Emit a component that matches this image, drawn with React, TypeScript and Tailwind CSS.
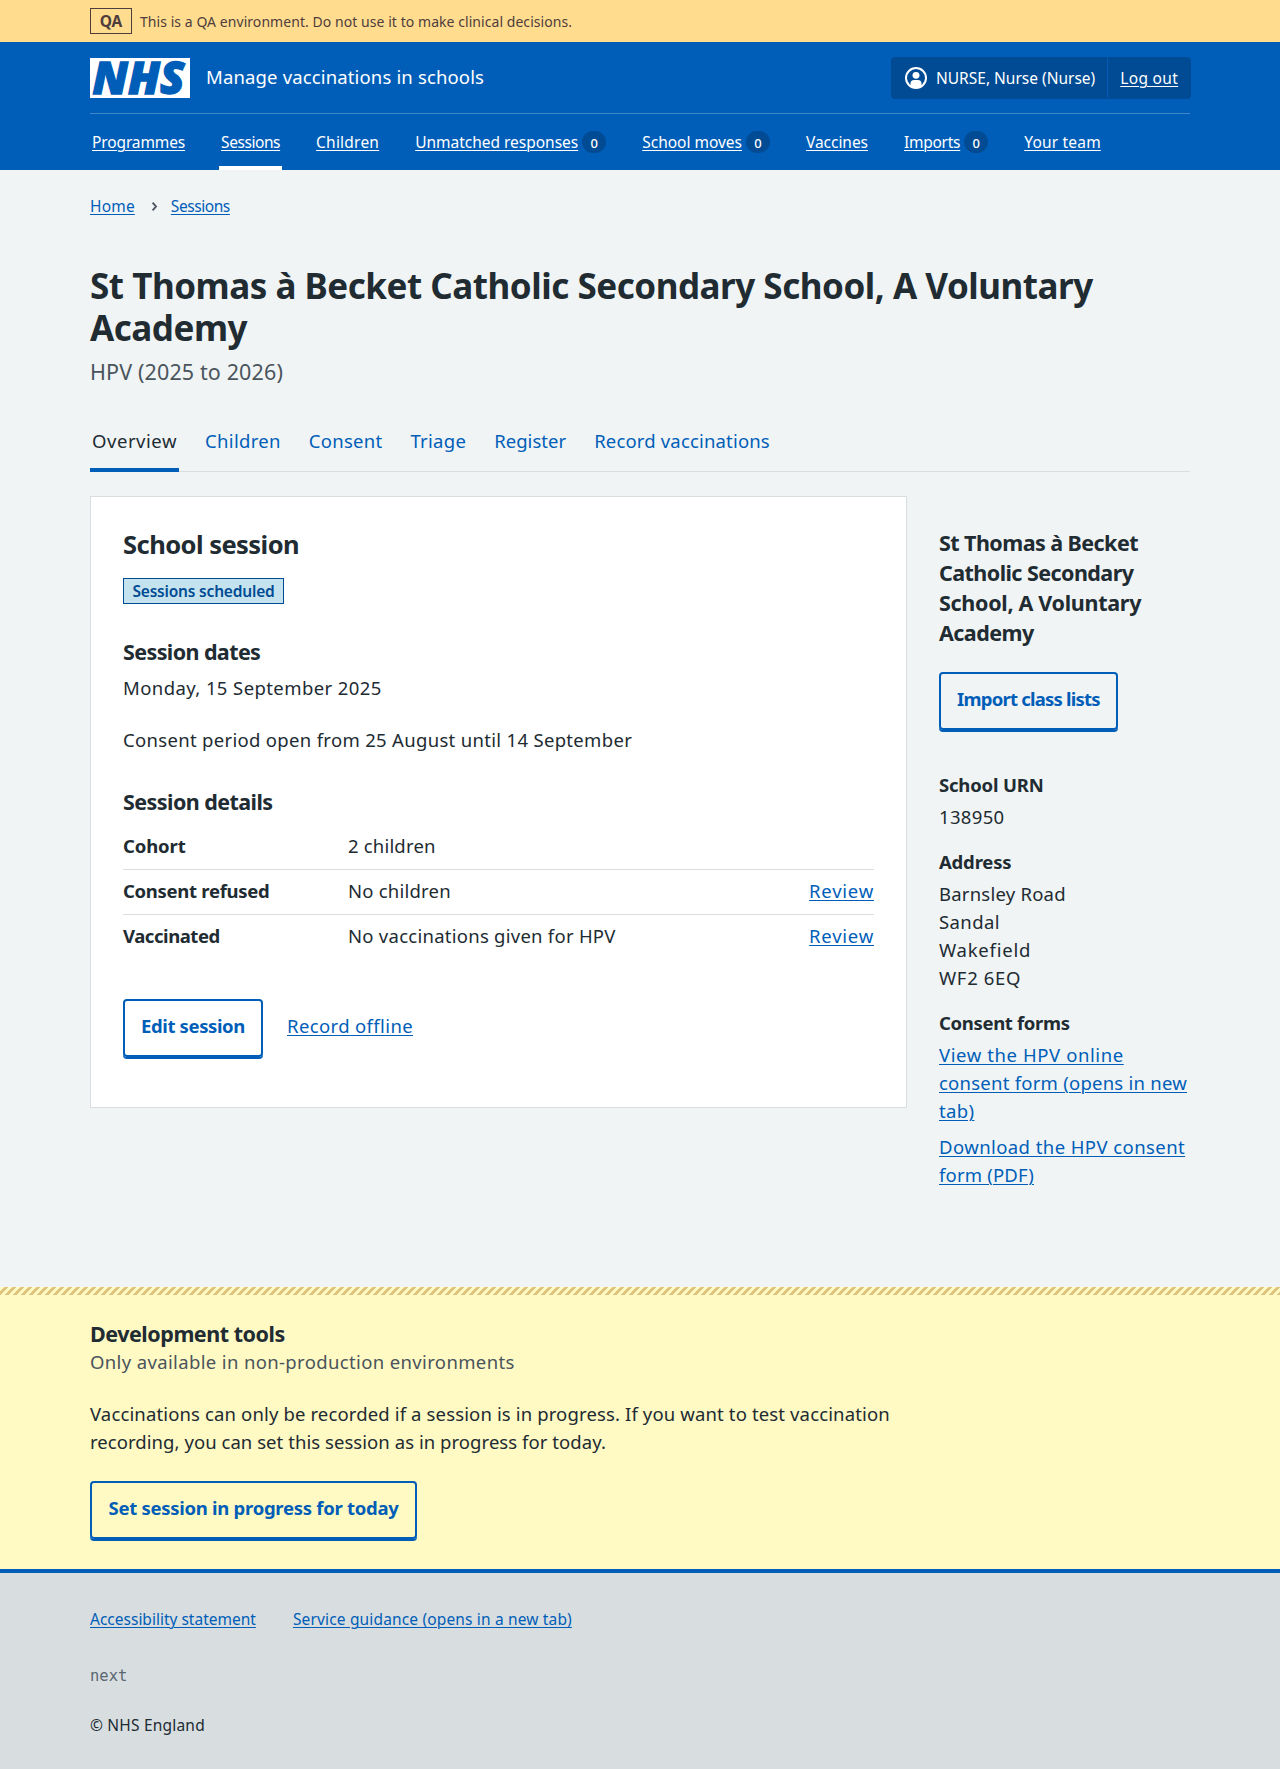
import type { ReactNode } from 'react';

function NhsLogo() {
  return (
    <svg className="mt-px h-10 w-[100px] shrink-0 overflow-visible" viewBox="0 0 100 40" role="img" aria-label="NHS">
      <rect width="100" height="40" fill="#fff" />
      <text
        x="2.6"
        y="36.3"
        textLength="92"
        lengthAdjust="spacingAndGlyphs"
        fill="#005eb8"
        stroke="#005eb8"
        strokeWidth="1.3"
        fontFamily="'Open Sans', 'Noto Sans', sans-serif"
        fontSize="45"
        fontWeight="800"
        fontStyle="italic"
      >
        NHS
      </text>
    </svg>
  );
}

function UserIcon() {
  return (
    <svg className="size-[22px] shrink-0" viewBox="0 0 22 22" aria-hidden="true">
      <circle cx="11" cy="11" r="10" fill="none" stroke="#fff" strokeWidth="2" />
      <ellipse cx="11" cy="8.3" rx="3.5" ry="3.4" fill="#fff" />
      <path d="M5.5 19.2V16.6a3.6 3.6 0 0 1 3.6-3.6h3.8a3.6 3.6 0 0 1 3.6 3.6v2.6A10 10 0 0 1 11 21a10 10 0 0 1-5.5-1.8Z" fill="#fff" />
    </svg>
  );
}

function Container({ children, className = '' }: { children: ReactNode; className?: string }) {
  return <div className={`mx-auto w-[1100px] ${className}`}>{children}</div>;
}

const linkClass = 'underline underline-offset-[2px] decoration-1 text-[#005eb8]';

const navItems: { label: string; tracking: string; count?: number; current?: boolean }[] = [
  { label: 'Programmes', tracking: 'tracking-[-0.008em]' },
  { label: 'Sessions', tracking: 'tracking-[-0.028em]', current: true },
  { label: 'Children', tracking: 'tracking-[0.014em]' },
  { label: 'Unmatched responses', tracking: 'tracking-[-0.001em]', count: 0 },
  { label: 'School moves', tracking: 'tracking-[-0.001em]', count: 0 },
  { label: 'Vaccines', tracking: 'tracking-[-0.002em]' },
  { label: 'Imports', tracking: 'tracking-[-0.017em]', count: 0 },
  { label: 'Your team', tracking: 'tracking-[0.012em]' },
];

function Header() {
  return (
    <header className="bg-[#005eb8] text-white">
      <Container>
        <div className="flex h-[72px] items-start justify-between border-b border-[#4086c9] pt-[15px]">
          <div className="flex">
            <NhsLogo />
            <span className="ml-4 mt-[6px] text-[18.5px] leading-7 tracking-[0.008em]">Manage vaccinations in schools</span>
          </div>
          <div className="-mr-px flex h-[42px] w-[300px] rounded-[4px] bg-[#004b93] text-[15.5px] leading-[42px]">
            <div className="flex items-center pl-[14px]">
              <UserIcon />
              <span className="ml-[9px]">NURSE, Nurse (Nurse)</span>
            </div>
            <div className="my-px ml-[12px] h-10 border-l border-[#005eb8] pl-3 leading-10">
              <a className="tracking-[0.021em] underline decoration-1 underline-offset-[2px]">Log out</a>
            </div>
          </div>
        </div>
        <nav className="flex h-14 gap-8 text-[15.5px] leading-[56px]">
          {navItems.map((item) => (
            <div
              key={item.label}
              className={item.current ? 'flex items-center whitespace-nowrap px-[2px] shadow-[inset_0_-4px_0_#fff]' : 'flex items-center whitespace-nowrap px-[2px]'}
            >
              <a className={`underline decoration-1 underline-offset-[2px] ${item.tracking}`}>{item.label}</a>
              {item.count !== undefined && (
                <span className="ml-1 flex h-[22px] w-6 items-center justify-center rounded-full bg-[#004b93] pt-px text-[13px] font-medium leading-[22px]">
                  {item.count}
                </span>
              )}
            </div>
          ))}
        </nav>
      </Container>
    </header>
  );
}

const tabs = [
  { label: 'Overview', tracking: 'tracking-[0.029em]' },
  { label: 'Children', tracking: 'tracking-[0.018em]' },
  { label: 'Consent', tracking: 'tracking-[0.014em]' },
  { label: 'Triage', tracking: 'tracking-[0.016em]' },
  { label: 'Register', tracking: 'tracking-[0.002em]' },
  { label: 'Record vaccinations', tracking: 'tracking-[0.009em]' },
];

function Button({ children, className }: { children: ReactNode; className: string }) {
  return (
    <button
      className={`block h-[58px] whitespace-nowrap rounded-[4px] border-2 border-[#005eb8] pb-[15px] pt-[11px] text-center text-[18.5px] font-bold leading-7 text-[#005eb8] shadow-[0_2px_0_#005eb8] ${className}`}
    >
      {children}
    </button>
  );
}

function SummaryRow({ term, termTracking, value, valueTracking, action, last }: {
  term: string;
  termTracking: string;
  value: string;
  valueTracking: string;
  action?: string;
  last?: boolean;
}) {
  return (
    <div className={last ? 'flex pb-[9px] pt-[7px]' : 'flex border-b border-[#d8dde0] pb-[9px] pt-[7px]'}>
      <dt className={`w-[225px] font-bold ${termTracking}`}>{term}</dt>
      <dd className={`flex-1 ${valueTracking}`}>{value}</dd>
      {action && (
        <dd className="tracking-[0.041em]">
          <a className={linkClass}>{action}</a>
        </dd>
      )}
    </div>
  );
}

function SessionCard() {
  return (
    <section className="h-[612px] w-[817px] border border-[#d8dde0] bg-white px-8 pt-[31px]">
      <h2 className="text-[25.5px] font-bold leading-8 tracking-[-0.021em]">School session</h2>
      <strong className="mt-[18px] flex h-[26px] w-[161px] items-center justify-center whitespace-nowrap border border-[#004b93] bg-[#c5e3ef] text-[15.5px] font-semibold leading-6 tracking-[-0.012em] text-[#004b93]">
        Sessions scheduled
      </strong>
      <h3 className="mt-[33px] text-[21.5px] font-bold leading-[30px] tracking-[-0.028em]">Session dates</h3>
      <p className="mt-[7px] tracking-[0.022em]">Monday, 15 September 2025</p>
      <p className="mt-6 tracking-[0.017em]">Consent period open from 25 August until 14 September</p>
      <h3 className="mt-[33px] text-[21.5px] font-bold leading-[30px] tracking-[-0.026em]">Session details</h3>
      <dl className="mt-2">
        <SummaryRow term="Cohort" termTracking="tracking-[-0.007em]" value="2 children" valueTracking="tracking-[0.01em]" />
        <SummaryRow term="Consent refused" termTracking="tracking-[-0.016em]" value="No children" valueTracking="tracking-[0.012em]" action="Review" />
        <SummaryRow term="Vaccinated" termTracking="tracking-[-0.024em]" value="No vaccinations given for HPV" valueTracking="tracking-[0.014em]" action="Review" last />
      </dl>
      <div className="mt-10 flex">
        <Button className="w-[140px] tracking-[-0.021em]">Edit session</Button>
        <a className={`ml-6 mt-[13px] tracking-[0.02em] ${linkClass}`}>Record offline</a>
      </div>
    </section>
  );
}

function SchoolDetails() {
  return (
    <aside className="ml-8 w-[251px] whitespace-nowrap pt-8">
      <h2 className="text-[21.5px] font-bold leading-[30px] tracking-[-0.026em]">
        St Thomas à Becket
        <br />
        Catholic Secondary
        <br />
        <span className="tracking-[-0.014em]">School, A Voluntary</span>
        <br />
        Academy
      </h2>
      <Button className="mt-6 w-[179px] tracking-[-0.042em]">Import class lists</Button>
      <dl>
        <dt className="mt-[41px] font-bold tracking-[-0.01em]">School URN</dt>
        <dd className="mt-1 tracking-[0.018em]">138950</dd>
        <dt className="mt-[17px] font-bold tracking-[-0.01em]">Address</dt>
        <dd className="mt-1">
          <span className="tracking-[0.012em]">Barnsley Road</span>
          <br />
          <span className="tracking-[0.022em]">Sandal</span>
          <br />
          <span className="tracking-[0.041em]">Wakefield</span>
          <br />
          <span className="tracking-[0.036em]">WF2 6EQ</span>
        </dd>
        <dt className="mt-[17px] font-bold tracking-[-0.018em]">Consent forms</dt>
        <dd className="mt-1">
          <a className={linkClass}>
            <span className="tracking-[0.032em]">View the HPV online</span>
            <br />
            <span className="tracking-[0.013em]">consent form (opens in new</span>
            <br />
            <span className="tracking-[0.02em]">tab)</span>
          </a>
        </dd>
        <dd className="mt-2">
          <a className={linkClass}>
            <span className="tracking-[0.023em]">Download the HPV consent</span>
            <br />
            <span className="tracking-[0.01em]">form (PDF)</span>
          </a>
        </dd>
      </dl>
    </aside>
  );
}

export default function App() {
  return (
    <div className="min-h-[1769px] bg-[#f0f4f5] font-['Noto_Sans','Open_Sans',sans-serif] text-[18.5px] leading-7 text-[#212b32]">
      <div className="bg-[#ffdc8e] text-[#4f3c3c]">
        <Container className="flex h-[42px] items-center">
          <strong className="flex h-[26px] w-[42px] items-center justify-center border border-current text-[15.5px] font-bold leading-6">QA</strong>
          <span className="ml-2 pt-px text-[14px] leading-5 tracking-[0.004em]">This is a QA environment. Do not use it to make clinical decisions.</span>
        </Container>
      </div>

      <Header />

      <main className="pb-[98px] pt-6">
        <Container>
          <nav className="flex h-6 items-center text-[15.5px] leading-6">
            <a className={`tracking-[0.012em] ${linkClass}`}>Home</a>
            <svg className="ml-[16px] mr-[13px] h-[11px] w-[7px]" viewBox="0 0 7 11" fill="none" stroke="#4c5560" strokeWidth="1.9" aria-hidden="true">
              <path d="M1.6 1.6 5 5.5 1.6 9.4" />
            </svg>
            <a className={`tracking-[-0.028em] ${linkClass}`}>Sessions</a>
          </nav>
          <h1 className="mt-[47px] text-[35px] font-bold leading-[42px] tracking-[-0.0135em]">
            St Thomas à Becket Catholic Secondary School, A Voluntary
            <br />
            Academy
          </h1>
          <p className="mt-[7px] text-[21.5px] leading-8 tracking-[0.006em] text-[#4a545c]">HPV (2025 to 2026)</p>
          <nav className="mt-[39px] flex h-[45px] gap-6 shadow-[inset_0_-1px_0_#d8dde0]">
            {tabs.map((tab, i) => (
              <a
                key={tab.label}
                className={`px-[2px] ${tab.tracking} ${i === 0 ? 'shadow-[inset_0_-4px_0_#005eb8]' : 'text-[#005eb8]'}`}
              >
                {tab.label}
              </a>
            ))}
          </nav>
          <div className="mt-6 flex items-start">
            <SessionCard />
            <SchoolDetails />
          </div>
        </Container>
      </main>

      <section className="bg-[#fff9c4] pb-[30px]">
        <div className="h-2 bg-[linear-gradient(-45deg,#dfc480_25%,#fff9c4_25%,#fff9c4_50%,#dfc480_50%,#dfc480_75%,#fff9c4_75%)] bg-[length:8px_8px]" />
        <Container className="pt-6">
          <h2 className="text-[21.5px] font-bold leading-[29px] tracking-[-0.022em]">Development tools</h2>
          <p className="tracking-[0.0195em] text-[#4a545c]">Only available in non-production environments</p>
          <p className="mt-6 whitespace-nowrap">
            <span className="tracking-[0.0075em]">Vaccinations can only be recorded if a session is in progress. If you want to test vaccination</span>
            <br />
            <span className="tracking-[0.003em]">recording, you can set this session as in progress for today.</span>
          </p>
          <Button className="mt-[25px] w-[327px] tracking-[-0.015em]">Set session in progress for today</Button>
        </Container>
      </section>

      <footer className="border-t-4 border-[#005eb8] bg-[#d8dde0] pb-8 pt-[34px] text-[15.5px] leading-6">
        <Container>
          <div className="flex">
            <a className={linkClass}>Accessibility statement</a>
            <a className={`ml-[37px] tracking-[0.01em] ${linkClass}`}>Service guidance (opens in a new tab)</a>
          </div>
          <p className="mt-[33px] font-['DejaVu_Sans_Mono',monospace] text-[#5a6670]">next</p>
          <p className="mt-[25px] tracking-[0.013em]">© NHS England</p>
        </Container>
      </footer>
    </div>
  );
}
